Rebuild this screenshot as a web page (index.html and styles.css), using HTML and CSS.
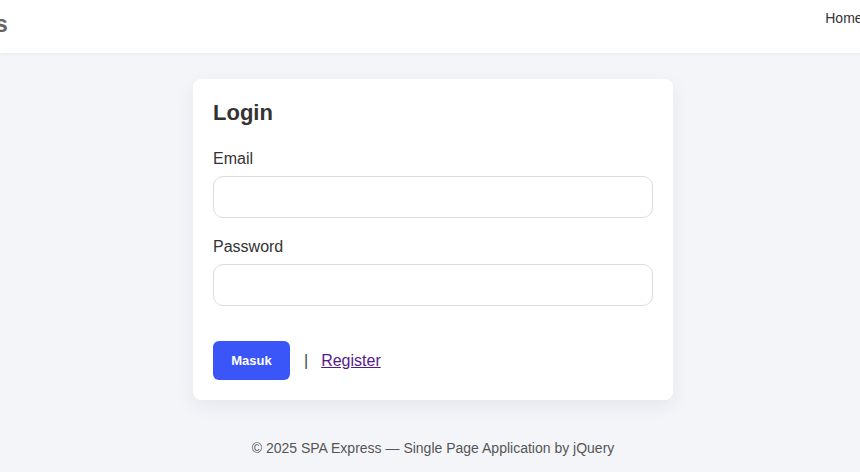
FILE: index.html
```html
<!DOCTYPE html>
<html lang="id">
<head>
    <meta charset="UTF-8">
    <meta name="viewport" content="width=device-width, initial-scale=1.0">
    <title>Login - SPA Express</title>
    <link rel="stylesheet" href="styles.css">
</head>
<body>
    <header class="topbar">
        <div class="topbar-inner">
            <a class="brand" href="#">SPA Express</a>
            <nav class="nav">
                <a href="#">Home</a>
                <a href="#">Login</a>
                <a href="#">Register</a>
            </nav>
        </div>
    </header>

    <main class="content">
        <div class="card">
            <h2>Login</h2>
            <form class="login-form">
                <div class="field">
                    <label for="email">Email</label>
                    <input type="email" id="email">
                </div>
                <div class="field">
                    <label for="password">Password</label>
                    <input type="password" id="password">
                </div>
                <div class="actions">
                    <button type="submit" class="btn">Masuk</button>
                    <span class="sep">|</span>
                    <a href="#" class="link">Register</a>
                </div>
            </form>
        </div>
    </main>

    <footer class="footer">
        &copy; 2025 SPA Express &mdash; Single Page Application by jQuery
    </footer>
</body>
</html>
```

FILE: styles.css
```css
html {
    overflow: hidden;
}
body {
    margin: 0;
    min-width: 866px;
    font-family: "Liberation Sans", Arial, sans-serif;
    background: #f4f5f9;
    color: #333;
}
.topbar {
    height: 53px;
    background: #fff;
    box-shadow: 0 1px 4px rgba(0, 0, 0, 0.06);
    display: flex;
    justify-content: center;
    overflow: hidden;
}
.topbar-inner {
    flex-shrink: 0;
    width: 1144px;
    display: flex;
    justify-content: space-between;
    align-items: flex-start;
}
.brand {
    font-size: 24px;
    font-weight: bold;
    color: #666;
    text-decoration: none;
    margin-top: 10px;
}
.nav {
    display: flex;
    gap: 22px;
    margin-top: 10px;
    padding-right: 12px;
}
.nav a {
    font-size: 14px;
    color: #333;
    text-decoration: none;
}
.content {
    display: flex;
    justify-content: center;
    padding-top: 26px;
}
.card {
    width: 440px;
    padding: 20px;
    background: #fff;
    border-radius: 8px;
    box-shadow: 0 6px 18px rgba(30, 40, 90, 0.07);
}
.card h2 {
    margin: 0 0 24px;
    font-size: 22px;
    line-height: 27px;
    color: #333;
}
.field {
    margin-bottom: 20px;
}
.field label {
    display: block;
    font-size: 16px;
    line-height: 18px;
    margin-bottom: 8px;
    color: #333;
}
.field input {
    display: block;
    box-sizing: border-box;
    width: 100%;
    height: 42px;
    border: 1px solid #dcdcdc;
    border-radius: 10px;
    background: #fff;
    font-size: 15px;
    padding: 0 12px;
}
.actions {
    display: flex;
    align-items: center;
    margin-top: 35px;
}
.btn {
    width: 77px;
    height: 39px;
    border: none;
    border-radius: 6px;
    background: #3a56f8;
    color: #fff;
    font-family: inherit;
    font-size: 13px;
    font-weight: bold;
}
.sep {
    margin: 0 13px 0 14px;
    font-size: 16px;
    color: #444;
}
.link {
    font-size: 16px;
    color: #551a8b;
}
.footer {
    text-align: center;
    font-size: 14px;
    color: #555;
    margin-top: 40px;
}
```
